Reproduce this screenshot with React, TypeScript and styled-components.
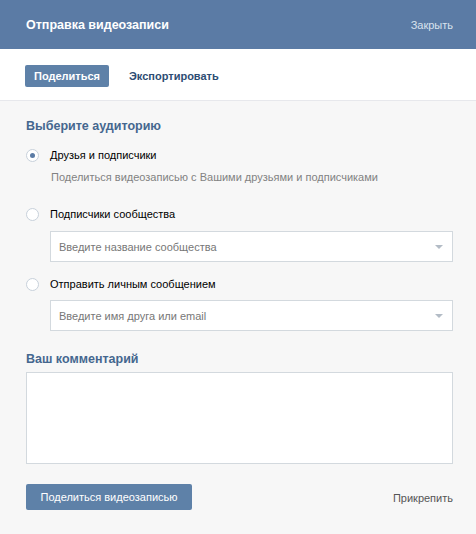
import React, { useState } from 'react';
import styled, { createGlobalStyle } from 'styled-components';

const GlobalStyle = createGlobalStyle`
  html, body {
    margin: 0;
    padding: 0;
    background: #f7f7f7;
  }
  body {
    font-family: "Liberation Sans", Arial, sans-serif;
    font-size: 11px;
    color: #000;
  }
`;

const Box = styled.div`
  width: 476px;
  height: 534px;
  background: #f7f7f7;
  font-family: "Liberation Sans", Arial, sans-serif;
  display: flex;
  flex-direction: column;
`;

const Header = styled.div`
  height: 49px;
  background: #5b7ba5;
  display: flex;
  align-items: center;
  justify-content: space-between;
  padding: 0 23px 0 26px;
  box-sizing: border-box;
`;

const Title = styled.div`
  color: #fff;
  font-weight: bold;
  font-size: 12.5px;
`;

const Close = styled.a`
  color: #d9e2ee;
  font-size: 11px;
  cursor: pointer;
`;

const Tabs = styled.div`
  height: 52px;
  background: #fff;
  border-bottom: 1px solid #e7e8ec;
  display: flex;
  align-items: center;
  gap: 20px;
  padding: 2px 25px 0;
  box-sizing: border-box;
`;

const Tab = styled.div<{ $active?: boolean }>`
  height: 22px;
  line-height: 22px;
  padding: 0 ${p => (p.$active ? '9px' : '0')};
  border-radius: 2px;
  font-weight: bold;
  font-size: 11px;
  color: ${p => (p.$active ? '#fff' : '#2e4d73')};
  background: ${p => (p.$active ? '#5e81a8' : 'transparent')};
  cursor: pointer;
`;

const Body = styled.div`
  padding: 17px 23px 0 26px;
  display: flex;
  flex-direction: column;
`;

const SectionTitle = styled.div<{ $top?: number }>`
  margin-top: ${p => p.$top ?? 0}px;
  color: #45678f;
  font-weight: bold;
  font-size: 12.5px;
  line-height: 16px;
`;

const RadioRow = styled.label<{ $top: number }>`
  margin-top: ${p => p.$top}px;
  display: flex;
  align-items: center;
  gap: 11px;
  height: 16px;
  cursor: pointer;
  color: #000;
  font-size: 11px;
`;

const RadioCircle = styled.span<{ $checked?: boolean }>`
  width: 13px;
  height: 13px;
  border-radius: 50%;
  border: 1px solid #c8d1db;
  background: #fff;
  box-sizing: border-box;
  display: flex;
  align-items: center;
  justify-content: center;
  &::after {
    content: '';
    width: 5px;
    height: 5px;
    border-radius: 50%;
    background: ${p => (p.$checked ? '#5b7ba5' : 'transparent')};
  }
`;

const Hint = styled.div`
  color: #828282;
  font-size: 11px;
  margin: 8px 0 0 25px;
`;

const Select = styled.div<{ $top: number }>`
  margin: ${p => p.$top}px 0 0 24px;
  height: 31px;
  border: 1px solid #d3d9de;
  background: #fff;
  box-sizing: border-box;
  display: flex;
  align-items: center;
  justify-content: space-between;
  padding: 0 9px 0 8px;
  color: #777;
  font-size: 11px;
`;

const Arrow = styled.span`
  width: 0;
  height: 0;
  border-left: 4px solid transparent;
  border-right: 4px solid transparent;
  border-top: 4px solid #b3bcc6;
`;

const Comment = styled.textarea`
  margin-top: 5px;
  height: 92px;
  border: 1px solid #d3d9de;
  background: #fff;
  resize: none;
  box-sizing: border-box;
  outline: none;
`;

const Footer = styled.div`
  margin-top: 20px;
  display: flex;
  align-items: center;
  justify-content: space-between;
`;

const Button = styled.button`
  height: 26px;
  width: 166px;
  border: none;
  border-radius: 2px;
  background: #5e81a8;
  color: #fff;
  font-family: inherit;
  font-size: 11px;
  cursor: pointer;
`;

const Attach = styled.a`
  color: #555;
  font-size: 11px;
  margin-top: 2px;
  cursor: pointer;
`;

const options = [
  'Друзья и подписчики',
  'Подписчики сообщества',
  'Отправить личным сообщением',
];

export default function App() {
  const [choice, setChoice] = useState(0);

  const radio = (i: number, top: number) => (
    <RadioRow $top={top} onClick={() => setChoice(i)}>
      <RadioCircle $checked={choice === i} />
      {options[i]}
    </RadioRow>
  );

  return (
    <>
      <GlobalStyle />
      <Box>
        <Header>
          <Title>Отправка видеозаписи</Title>
          <Close>Закрыть</Close>
        </Header>
        <Tabs>
          <Tab $active>Поделиться</Tab>
          <Tab>Экспортировать</Tab>
        </Tabs>
        <Body>
          <SectionTitle>Выберите аудиторию</SectionTitle>
          {radio(0, 13)}
          <Hint>Поделиться видеозаписью с Вашими друзьями и подписчиками</Hint>
          {radio(1, 23)}
          <Select $top={9}>
            Введите название сообщества
            <Arrow />
          </Select>
          {radio(2, 14)}
          <Select $top={8}>
            Введите имя друга или email
            <Arrow />
          </Select>
          <SectionTitle $top={20}>Ваш комментарий</SectionTitle>
          <Comment />
          <Footer>
            <Button>Поделиться видеозаписью</Button>
            <Attach>Прикрепить</Attach>
          </Footer>
        </Body>
      </Box>
    </>
  );
}
